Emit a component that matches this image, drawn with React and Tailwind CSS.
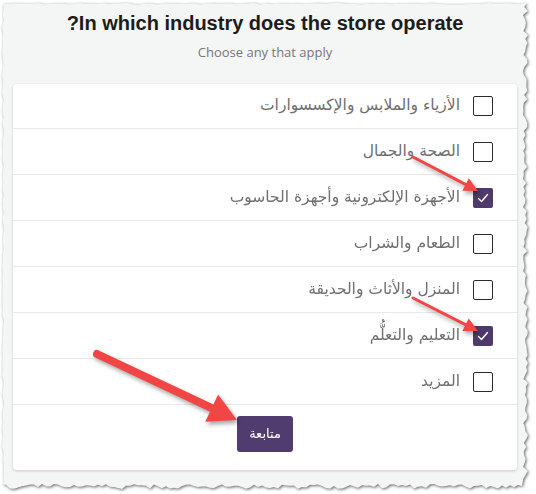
import React from "react";

const OPTIONS = [
  { label: "الأزياء والملابس والإكسسوارات", checked: false },
  { label: "الصحة والجمال", checked: false },
  { label: "الأجهزة الإلكترونية وأجهزة الحاسوب", checked: true },
  { label: "الطعام والشراب", checked: false },
  { label: "المنزل والأثاث والحديقة", checked: false },
  { label: "التعليم والتعلُّم", checked: true },
  { label: "المزيد", checked: false },
];

// torn paper outline, seeded so it is the same every run
function tornPath(w, h) {
  let seed = 7;
  const rnd = () => {
    seed = (seed * 9301 + 49297) % 233280;
    return seed / 233280;
  };
  const pts = [];
  for (let x = 0; x <= w - 8; x += 6) pts.push([x, rnd() * 1.5]);
  for (let y = 0; y <= h - 8; y += 4) pts.push([w - 5 + rnd() * 5, y]);
  for (let x = w - 6; x >= 0; x -= 4) pts.push([x, h - 5 + rnd() * 5]);
  for (let y = h - 6; y >= 0; y -= 6) pts.push([rnd() * 2, y]);
  return "polygon(" + pts.map(([x, y]) => `${x.toFixed(1)}px ${y.toFixed(1)}px`).join(",") + ")";
}

function Checkbox({ checked }) {
  if (checked) {
    return (
      <span className="flex h-5 w-5 shrink-0 items-center justify-center rounded-[2px] bg-[#4f3b6b]">
        <svg width="14" height="14" viewBox="0 0 14 14" fill="none">
          <path d="M2.5 7.5 L5.5 10.5 L11.5 3.5" stroke="#fff" strokeWidth="1.4" strokeLinecap="round" strokeLinejoin="round" />
        </svg>
      </span>
    );
  }
  return <span className="h-5 w-5 shrink-0 rounded-[2px] border-[1.5px] border-[#2b2b2b] bg-white" />;
}

function Arrow({ x1, y1, x2, y2, w, head, spread }) {
  const dx = x2 - x1;
  const dy = y2 - y1;
  const len = Math.hypot(dx, dy);
  const ux = dx / len;
  const uy = dy / len;
  const bx = x2 - ux * head;
  const by = y2 - uy * head;
  const p = `${x2},${y2} ${bx - uy * spread},${by + ux * spread} ${bx + uy * spread},${by - ux * spread}`;
  return (
    <g>
      <line x1={x1} y1={y1} x2={bx + ux * 2} y2={by + uy * 2} stroke="#f24646" strokeWidth={w} strokeLinecap="round" />
      <polygon points={p} fill="#f24646" />
    </g>
  );
}

export default function App() {
  return (
    <div className="relative h-[494px] w-[536px] overflow-hidden bg-white">
      <div className="ml-[2px] mt-[3px] w-[526px] drop-shadow-[1px_1px_1.5px_rgba(0,0,0,0.6)]">
        <div dir="rtl" className="h-[486px] w-[526px] bg-[#f4f5f5] pt-[8px]" style={{ clipPath: tornPath(526, 486) }}>
          <h1 className="text-center text-[20px] font-bold leading-[24px] text-[#1c1c1c] [font-family:'Liberation_Sans',Arial,sans-serif]">
            In which industry does the store operate?
          </h1>
          <p className="mt-2 text-center text-[13px] leading-[18px] text-[#777] [font-family:'Open_Sans',sans-serif]">
            Choose any that apply
          </p>
          <div className="mx-auto mt-[23px] w-[504px] rounded-[4px] bg-white shadow-[0_1px_3px_rgba(0,0,0,0.18)]">
            {OPTIONS.map((o, i) => (
              <div
                key={i}
                className="flex h-[46px] items-center gap-[13px] border-b border-[#e9e9e9] pr-6 first:h-[45px]"
              >
                <Checkbox checked={o.checked} />
                <span className="text-[15.5px] text-[#6f6f6f] [font-family:'DejaVu_Sans','Noto_Sans',sans-serif]">{o.label}</span>
              </div>
            ))}
            <div className="flex justify-center pb-[18px] pt-[11px]">
              <button className="h-9 w-14 rounded-[3px] bg-[#503c6e] text-[13px] text-white [font-family:'DejaVu_Sans',sans-serif]">
                متابعة
              </button>
            </div>
          </div>
        </div>
      </div>
      <svg className="pointer-events-none absolute left-0 top-0 drop-shadow-[2px_3px_2px_rgba(0,0,0,0.35)]" width="536" height="494">
        <Arrow x1={413} y1={157} x2={478} y2={191} w={3} head={14} spread={7} />
        <Arrow x1={413} y1={298} x2={478} y2={331} w={3} head={14} spread={7} />
        <Arrow x1={97} y1={354} x2={237} y2={420} w={8} head={28} spread={15} />
      </svg>
    </div>
  );
}
